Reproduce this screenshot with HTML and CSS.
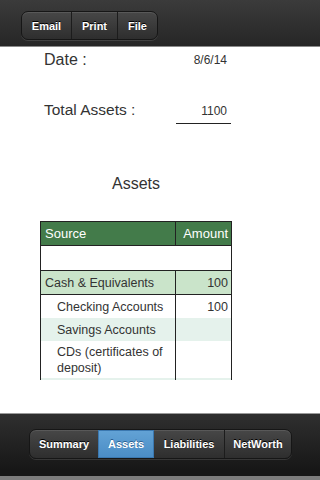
FILE: index.html
```html
<!DOCTYPE html>
<html>
<head>
<meta charset="utf-8">
<link rel="stylesheet" href="styles.css">
</head>
<body>
<div class="app">
  <header class="topbar">
    <div class="seg">
      <span class="btn b-email">Email</span>
      <span class="btn b-print">Print</span>
      <span class="btn b-file">File</span>
    </div>
  </header>
  <main class="main">
    <div class="scroll">
      <div class="row date-row">
        <span class="label">Date :</span>
        <span class="value">8/6/14</span>
      </div>
      <div class="row total-row">
        <span class="label">Total Assets :</span>
        <span class="value total">1100</span>
      </div>
      <h2 class="title">Assets</h2>
      <div class="table">
        <div class="tr head"><div class="c1">Source</div><div class="c2">Amount</div></div>
        <div class="tr blank line"><div class="c1 span"></div></div>
        <div class="tr cat line"><div class="c1">Cash &amp; Equivalents</div><div class="c2">100</div></div>
        <div class="tr item"><div class="c1">Checking Accounts</div><div class="c2">100</div></div>
        <div class="tr item alt"><div class="c1">Savings Accounts</div><div class="c2"></div></div>
        <div class="tr item tall"><div class="c1">CDs (certificates of deposit)</div><div class="c2"></div></div>
        <div class="tr item alt"><div class="c1"></div><div class="c2"></div></div>
      </div>
    </div>
  </main>
  <footer class="bottombar">
    <div class="seg tabs">
      <span class="btn t-sum">Summary</span>
      <span class="btn t-assets active">Assets</span>
      <span class="btn t-liab">Liabilities</span>
      <span class="btn t-net">NetWorth</span>
    </div>
  </footer>
</div>
</body>
</html>
```

FILE: styles.css
```css
* { box-sizing: border-box; margin: 0; padding: 0; }
html, body { width: 320px; height: 480px; overflow: hidden; }
body { font-family: "Liberation Sans", Arial, sans-serif; background: #fff; color: #333; }
.app { display: flex; flex-direction: column; height: 480px; }

.topbar {
  height: 47px;
  flex: none;
  background: linear-gradient(#3b3b3b, #262626);
  border-bottom: 1px solid #8a8a8a;
  padding: 11px 0 0 21px;
}
.seg {
  display: inline-flex;
  height: 29px;
  border: 1px solid #161616;
  border-radius: 7px;
  overflow: hidden;
  background: linear-gradient(#474747, #2e2e2e);
  box-shadow: 0 1px 0 rgba(255,255,255,0.12), inset 0 1px 0 rgba(255,255,255,0.1);
}
.btn {
  display: flex;
  align-items: center;
  justify-content: center;
  color: #fff;
  font-weight: bold;
  font-size: 11px;
  text-shadow: 0 -1px 0 #000;
  border-left: 1px solid #1c1c1c;
}
.btn:first-child { border-left: none; }
.b-email { width: 49px; }
.b-print { width: 46px; }
.b-file { width: 40px; }

.main { flex: 1; display: flex; flex-direction: column; }
.scroll { height: 333px; overflow: hidden; }

.row { display: flex; align-items: flex-start; padding-left: 44px; }
.label { font-size: 16px; width: 132px; line-height: 18px; }
.value { font-size: 12px; width: 51px; text-align: right; line-height: 14px; }
.date-row { padding-top: 4px; }
.date-row .value { padding-top: 2px; }
.total-row { padding-top: 32px; }
.total-row .label { font-size: 15.5px; }
.total-row .value { padding-top: 3px; }
.total {
  width: 55px;
  padding-right: 4px;
  border-bottom: 1px solid #222;
  height: 23px;
}

.title {
  font-weight: normal;
  font-size: 16px;
  width: 192px;
  margin: 50px 0 0 40px;
  text-align: center;
  line-height: 20px;
}

.table {
  width: 192px;
  margin: 27px 0 0 40px;
  border-left: 1px solid #222;
  border-right: 1px solid #222;
  border-top: 1px solid #222;
  font-size: 12.5px;
}
.tr { display: flex; min-height: 23px; }
.tr .c1 { width: 135px; border-right: 1px solid #222; padding: 4px 0 0 4px; line-height: 16px; white-space: nowrap; }
.tr .c2 { flex: 1; text-align: right; padding: 4px 3px 0 0; line-height: 16px; }
.tr .span { width: 100%; border-right: none; }
.head { background: #437b4a; color: #fff; height: 24px; border-bottom: 1px solid #222; }
.head .c1, .head .c2 { font-size: 13px; padding-top: 4px; }
.blank { height: 25px; border-bottom: 1px solid #222; }
.cat { height: 24px; background: #cae4ca; border-bottom: 1px solid #222; }
.item .c1 { padding-left: 16px; }
.item { height: 23px; }
.alt { background: #e5f2ec; }
.tall { height: 37px; }
.tall .c1 { padding-top: 3px; padding-right: 12px; white-space: normal; }

.bottombar {
  height: 67px;
  flex: none;
  background: linear-gradient(#2f2f2f, #171717 90%);
  border-top: 1px solid #9a9a9a;
  border-bottom: 4px solid #7d7d7d;
  padding: 15px 0 0 29px;
}
.tabs { height: 30px; }
.t-sum { width: 68px; }
.t-assets { width: 56px; }
.t-liab { width: 70px; }
.t-net { width: 67px; }
.active {
  background: linear-gradient(#62a2d5, #4b8dc6);
  border: 1px solid #3b78b0;
  text-shadow: 0 -1px 0 #2b5f8f;
}
.t-liab { border-left: none; }
```
